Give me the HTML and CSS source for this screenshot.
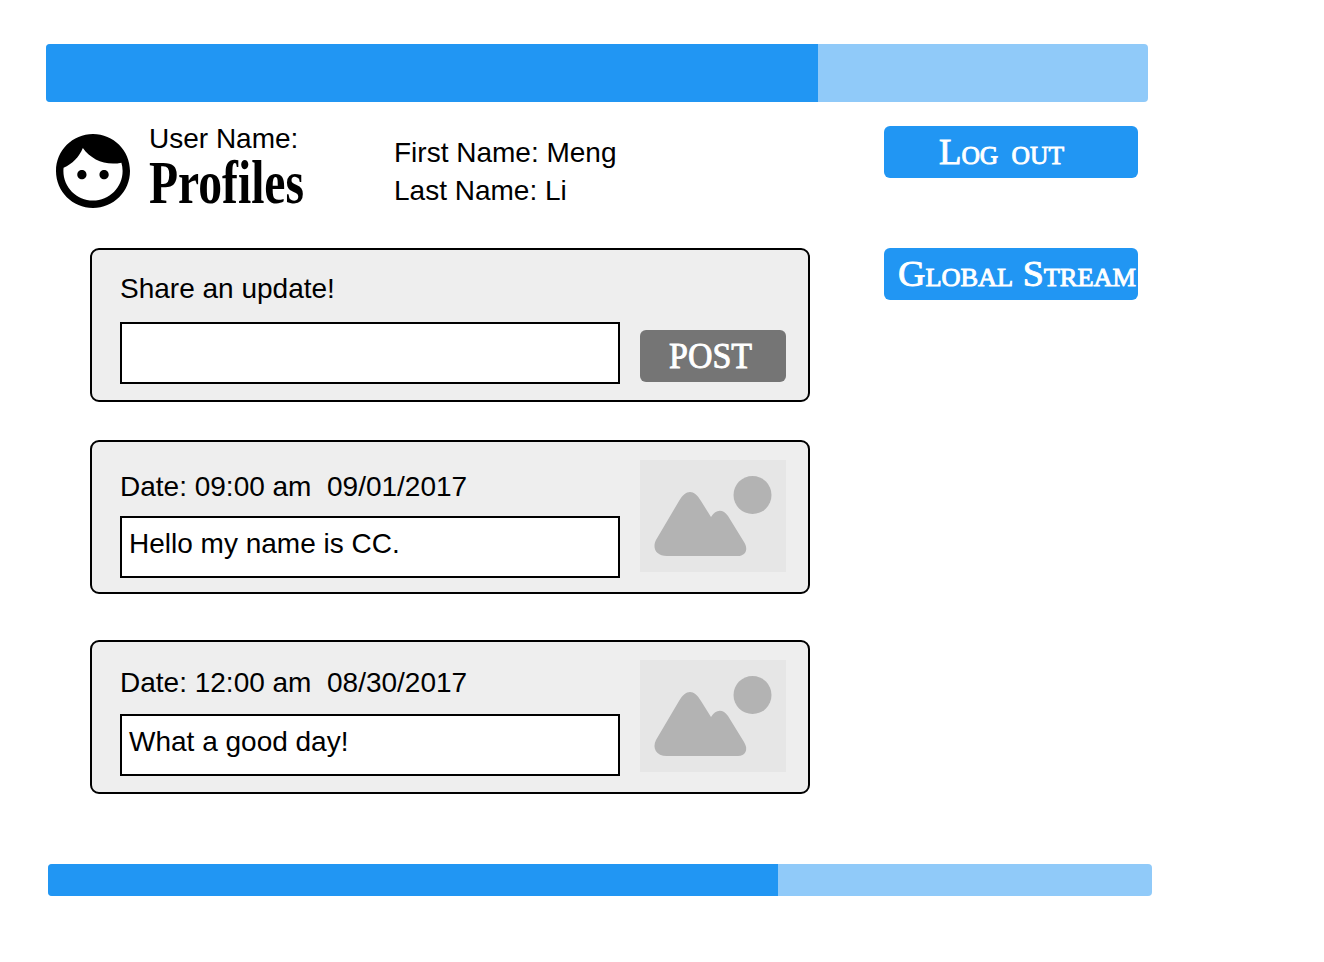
FILE: index.html
```html
<!DOCTYPE html>
<html lang="en">
<head>
<meta charset="utf-8">
<title>Profiles</title>
<link rel="stylesheet" href="styles.css">
</head>
<body>
<div class="page">
  <div class="bar bar-top"><div class="bar-fill"></div></div>
  <div class="content">
    <main class="main">
      <header class="profile">
        <svg class="avatar" viewBox="2 2 20 20"><path d="M9 11.75c-.69 0-1.25.56-1.25 1.25s.56 1.25 1.25 1.25 1.25-.56 1.25-1.25-.56-1.25-1.25-1.25zm6 0c-.69 0-1.25.56-1.25 1.25s.56 1.25 1.25 1.25 1.25-.56 1.25-1.25-.56-1.25-1.25-1.25zM12 2C6.48 2 2 6.48 2 12s4.480 10 10 10 10-4.480 10-10S17.520 2 12 2zm0 18c-4.410 0-8-3.590-8-8 0-.29.02-.58.05-.86 2.360-1.050 4.230-2.980 5.210-5.370C11.070 8.330 14.050 10 17.420 10c.78 0 1.530-.09 2.250-.26.21.71.33 1.470.33 2.260 0 4.410-3.590 8-8 8z"/></svg>
        <div class="user">
          <div class="label">User Name:</div>
          <svg class="handle" viewBox="0 0 160 64"><text x="1" y="48" textLength="155" lengthAdjust="spacingAndGlyphs">Profiles</text></svg>
        </div>
        <div class="names">
          <div>First Name: Meng</div>
          <div>Last Name: Li</div>
        </div>
      </header>
      <section class="card card-share">
        <div class="card-body">
          <div class="title">Share an update!</div>
          <div class="field"></div>
        </div>
        <button class="btn btn-post"><svg viewBox="0 0 146 52"><text x="29" y="38" font-size="36" textLength="83" lengthAdjust="spacingAndGlyphs">POST</text></svg></button>
      </section>
      <section class="card card-first">
        <div class="card-body">
          <div class="title">Date: 09:00 am&nbsp; 09/01/2017</div>
          <div class="field">Hello my name is CC.</div>
        </div>
        <svg class="thumb" viewBox="0 0 146 112"><circle cx="112.500" cy="35" r="19"/><path d="M16 80L39 41C46 29 54 29 61 41L71 57C76 49 83 49 88 56L104 82C109 90 105 96 98 96H27C16 96 12 88 16 80Z"/></svg>
      </section>
      <section class="card card-second">
        <div class="card-body">
          <div class="title">Date: 12:00 am&nbsp; 08/30/2017</div>
          <div class="field">What a good day!</div>
        </div>
        <svg class="thumb" viewBox="0 0 146 112"><circle cx="112.500" cy="35" r="19"/><path d="M16 80L39 41C46 29 54 29 61 41L71 57C76 49 83 49 88 56L104 82C109 90 105 96 98 96H27C16 96 12 88 16 80Z"/></svg>
      </section>
    </main>
    <aside class="actions">
      <button class="btn"><svg viewBox="0 0 254 52"><text class="caps" x="55" y="38" font-size="36" word-spacing="4" textLength="125" lengthAdjust="spacingAndGlyphs">Log out</text></svg></button>
      <button class="btn"><svg viewBox="0 0 254 52"><text class="caps" x="14" y="38" font-size="36" textLength="238" lengthAdjust="spacingAndGlyphs">Global Stream</text></svg></button>
    </aside>
  </div>
  <div class="bar bar-bottom"><div class="bar-fill"></div></div>
</div>
</body>
</html>
```
FILE: styles.css
```css
* { box-sizing: border-box; }
body {
  margin: 0;
  background: #fff;
  color: #000;
  font: 28px/34px "Liberation Sans", Arial, sans-serif;
}
.page { padding: 44px 0 0 46px; }
.bar {
  overflow: hidden;
  border-radius: 4px;
  background: #90caf9;
}
.bar-fill { height: 100%; background: #2196f3; }
.bar-top { width: 1102px; height: 58px; }
.bar-top .bar-fill { width: 772px; }
.bar-bottom { width: 1104px; height: 32px; margin: 70px 0 0 2px; }
.bar-bottom .bar-fill { width: 730px; }
.content { display: grid; grid-template-columns: 838px 254px; }
.profile { display: flex; height: 146px; padding-left: 10px; }
.avatar { width: 74px; height: 74px; margin-top: 32px; }
.user { width: 246px; margin-left: 18px; padding-top: 20px; }
.label { padding-left: 1px; }
.handle { display: block; width: 160px; height: 64px; margin-top: -1px; overflow: visible; }
.handle text { font: bold 61px "Liberation Serif", serif; }
.names { padding-top: 32px; line-height: 38px; }
.card {
  display: flex;
  align-items: flex-start;
  width: 720px;
  height: 154px;
  margin-left: 44px;
  padding-left: 28px;
  border: 2px solid #000;
  border-radius: 9px;
  background: #eee;
}
.card-body { width: 500px; margin-right: 20px; }
.title { white-space: nowrap; }
.field {
  height: 62px;
  padding: 9px 7px;
  border: 2px solid #000;
  background: #fff;
}
.card-share .card-body { padding-top: 22px; }
.card-share .field { margin-top: 16px; }
.card-first { margin-top: 38px; }
.card-first .card-body { padding-top: 28px; }
.card-first .field { margin-top: 12px; }
.card-second { margin-top: 46px; }
.card-second .card-body { padding-top: 24px; }
.card-second .field { margin-top: 14px; }
.thumb {
  width: 146px;
  height: 112px;
  margin-top: 18px;
  background: #e6e6e6;
  fill: #b3b3b3;
}
.btn {
  display: block;
  width: 254px;
  height: 52px;
  padding: 0;
  border: 0;
  border-radius: 6px;
  background: #2196f3;
}
.btn svg { display: block; width: 100%; height: 100%; overflow: visible; }
.btn text {
  font-family: "Liberation Serif", serif;
  fill: #fff;
  stroke: #fff;
  stroke-width: .9px;
}
.caps { font-variant: small-caps; }
.btn-post { width: 146px; margin-top: 80px; background: #757575; }
.actions { display: flex; flex-direction: column; gap: 70px; padding-top: 24px; }
```
